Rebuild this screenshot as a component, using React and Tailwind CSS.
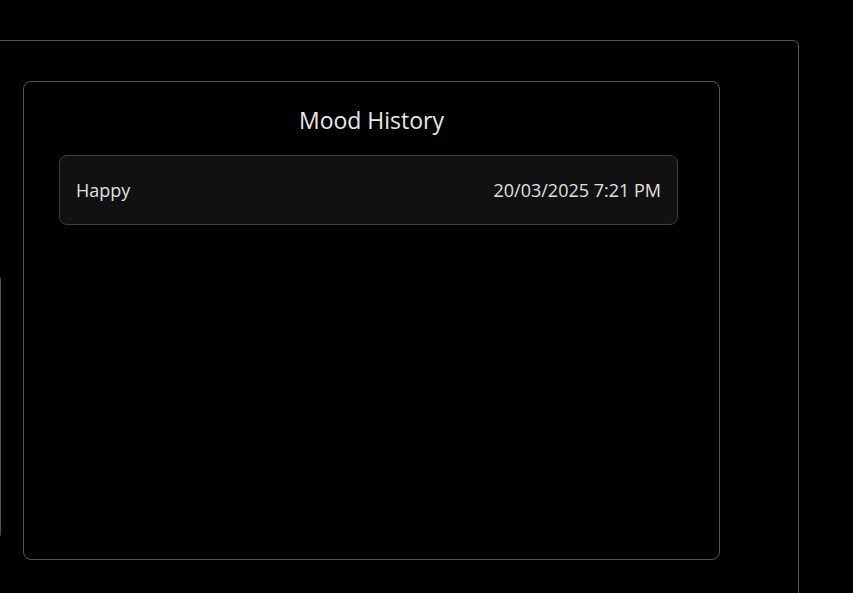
import React from 'react';

const entries = [{ mood: 'Happy', time: '20/03/2025 7:21 PM' }];

export default function App() {
    return (
        <div className="w-[853px] h-[593px] bg-black overflow-hidden pt-10 font-['Open_Sans',sans-serif]">
            <div className="ml-[-300px] w-[1099px] h-[620px] border border-[#555555] rounded-md flex items-start gap-[22px] pl-5 pt-10">
                {/* left panel, mostly off screen */}
                <div className="w-[280px] h-[269px] mt-[191px] border border-[#555555] rounded-lg shrink-0" />

                {/* Mood history */}
                <div className="w-[697px] h-[479px] border border-[#555555] rounded-lg shrink-0 pt-[21px]">
                    <h2 className="text-center text-[23px] leading-[34px] text-[#e8e8e8]">Mood History</h2>
                    <ul className="mt-[18px] ml-[35px] w-[619px] flex flex-col gap-3">
                        {entries.map((e) => (
                            <li
                                key={e.time}
                                className="h-[70px] px-4 flex items-center justify-between bg-[#111111] border border-[#3c3c3c] rounded-lg text-[18px] text-[#e0e0e0]"
                            >
                                <span>{e.mood}</span>
                                <span>{e.time}</span>
                            </li>
                        ))}
                    </ul>
                </div>
            </div>
        </div>
    );
}
